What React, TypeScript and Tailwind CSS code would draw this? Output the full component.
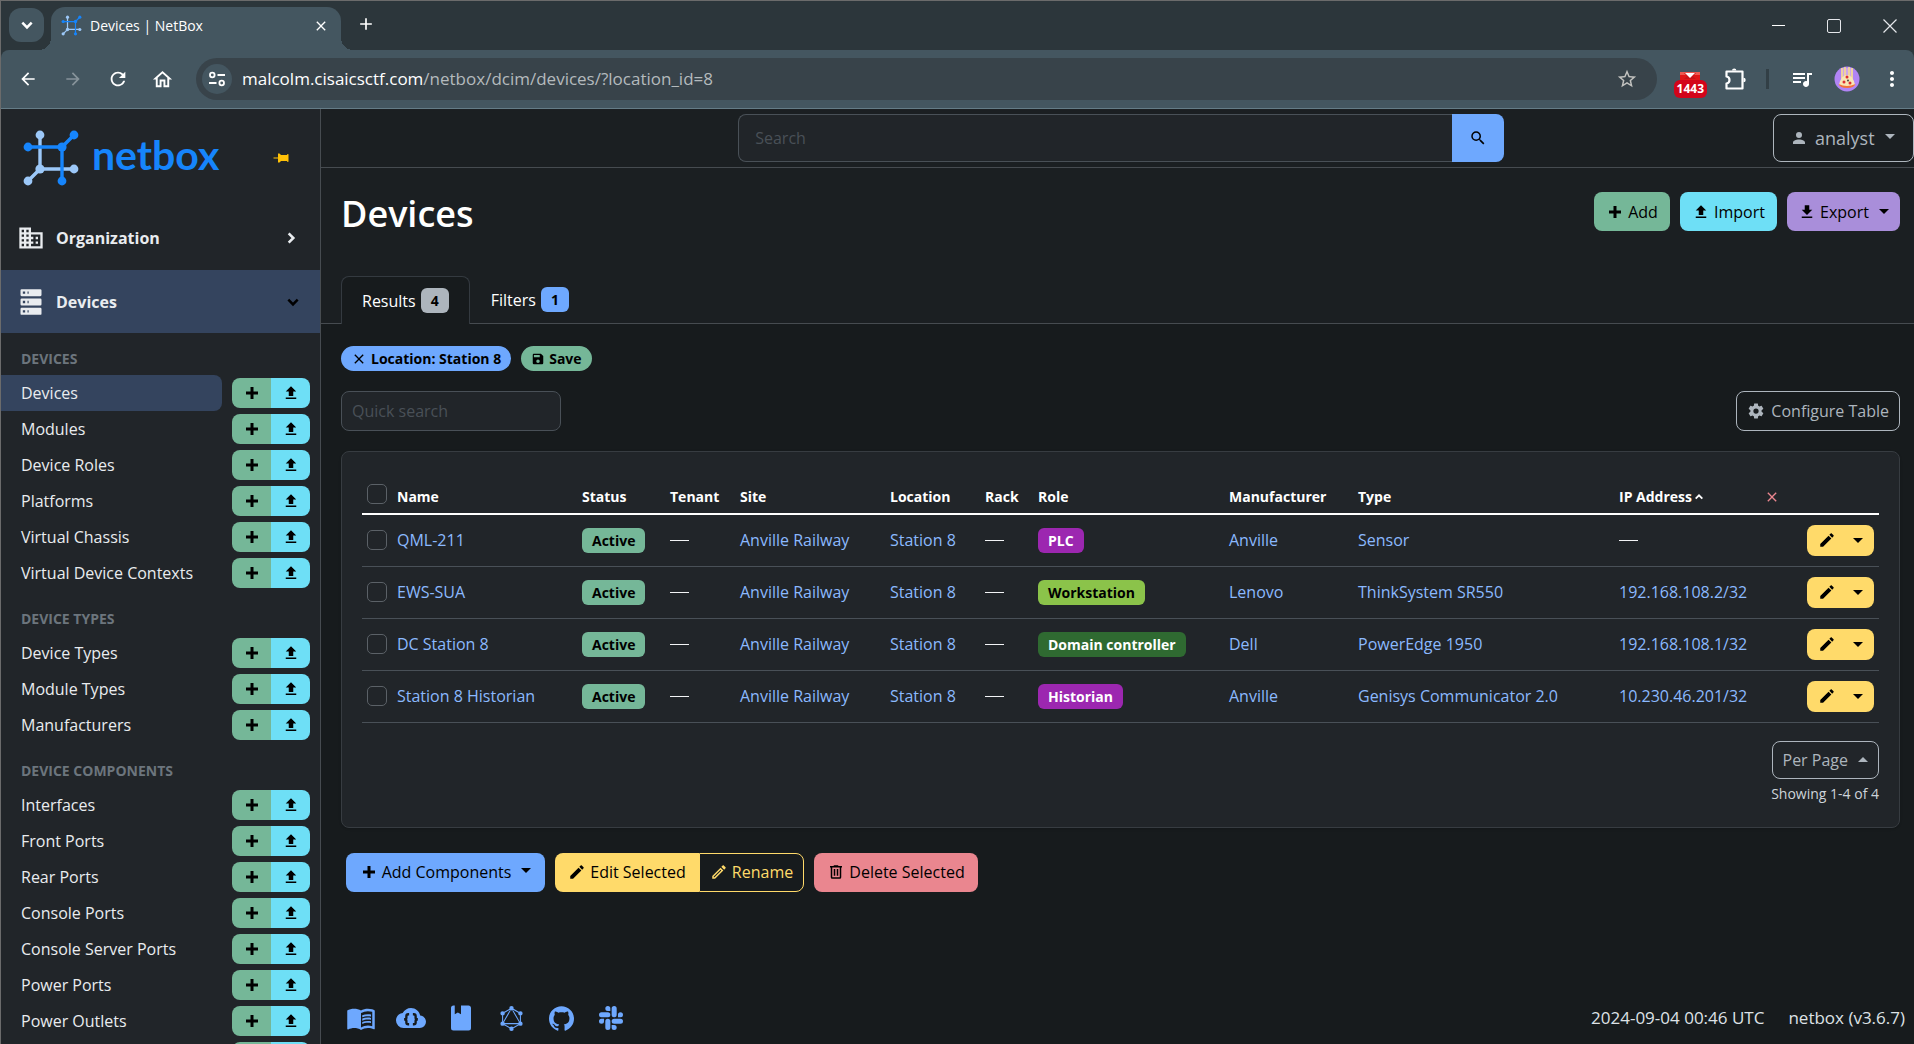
import type { ReactNode } from "react";
import {
  MdArrowBack,
  MdArrowForward,
  MdClose,
  MdAdd,
  MdRefresh,
  MdMenuBook,
  MdMoreVert,
  MdOutlineHome,
  MdQueueMusic,
  MdStarOutline,
} from "react-icons/md";
import { SiGithub, SiGraphql, SiSlack } from "react-icons/si";

const paths = {
  plus: "M20 14H14V20H10V14H4V10H10V4H14V10H20V14Z",
  upload: "M9,16V10H5L12,3L19,10H15V16H9M5,20V18H19V20H5Z",
  download: "M5,20H19V18H5M19,9H15V3H9V9H5L12,16L19,9Z",
  pencil:
    "M20.71,7.04C21.1,6.65 21.1,6 20.71,5.63L18.37,3.29C18,2.9 17.35,2.9 16.96,3.29L15.12,5.12L18.87,8.87M3,17.25V21H6.75L17.81,9.93L14.06,6.18L3,17.25Z",
  pencilOutline:
    "M14.06,9L15,9.94L5.92,19H5V18.08L14.06,9M17.66,3C17.41,3 17.15,3.1 16.96,3.29L15.13,5.12L18.88,8.87L20.71,7.04C21.1,6.65 21.1,6 20.71,5.63L18.37,3.29C18.17,3.09 17.92,3 17.66,3M14.06,6.19L3,17.25V21H6.75L17.81,9.94L14.06,6.19Z",
  trash:
    "M9,3V4H4V6H5V19A2,2 0 0,0 7,21H17A2,2 0 0,0 19,19V6H20V4H15V3H9M7,6H17V19H7V6M9,8V17H11V8H9M13,8V17H15V8H13Z",
  cog: "M12,15.5A3.5,3.5 0 0,1 8.5,12A3.5,3.5 0 0,1 12,8.5A3.5,3.5 0 0,1 15.5,12A3.5,3.5 0 0,1 12,15.5M19.43,12.97C19.47,12.65 19.5,12.33 19.5,12C19.5,11.67 19.47,11.34 19.43,11L21.54,9.37C21.73,9.22 21.78,8.95 21.66,8.73L19.66,5.27C19.54,5.05 19.27,4.96 19.05,5.05L16.56,6.05C16.04,5.66 15.5,5.32 14.87,5.07L14.5,2.42C14.46,2.18 14.25,2 14,2H10C9.75,2 9.54,2.18 9.5,2.42L9.13,5.07C8.5,5.32 7.96,5.66 7.44,6.05L4.95,5.05C4.73,4.96 4.46,5.05 4.34,5.27L2.34,8.73C2.21,8.95 2.27,9.22 2.46,9.37L4.57,11C4.53,11.34 4.5,11.67 4.5,12C4.5,12.33 4.53,12.65 4.57,12.97L2.46,14.63C2.27,14.78 2.21,15.05 2.34,15.27L4.34,18.73C4.46,18.95 4.73,19.03 4.95,18.95L7.44,17.94C7.96,18.34 8.5,18.68 9.13,18.93L9.5,21.58C9.54,21.82 9.75,22 10,22H14C14.25,22 14.46,21.82 14.5,21.58L14.87,18.93C15.5,18.67 16.04,18.34 16.56,17.94L19.05,18.95C19.27,19.03 19.54,18.95 19.66,18.73L21.66,15.27C21.78,15.05 21.73,14.78 21.54,14.63L19.43,12.97Z",
  domain:
    "M18,15H16V17H18M18,11H16V13H18M20,19H12V17H14V15H12V13H14V11H12V9H20M10,7H8V5H10M10,11H8V9H10M10,15H8V13H10M10,19H8V17H10M6,7H4V5H6M6,11H4V9H6M6,15H4V13H6M6,19H4V17H6M12,7V3H2V21H22V7H12Z",
  server:
    "M4,1H20A1,1 0 0,1 21,2V6A1,1 0 0,1 20,7H4A1,1 0 0,1 3,6V2A1,1 0 0,1 4,1M4,9H20A1,1 0 0,1 21,10V14A1,1 0 0,1 20,15H4A1,1 0 0,1 3,14V10A1,1 0 0,1 4,9M4,17H20A1,1 0 0,1 21,18V22A1,1 0 0,1 20,23H4A1,1 0 0,1 3,22V18A1,1 0 0,1 4,17M9,5H10V3H9V5M9,13H10V11H9V13M9,21H10V19H9V21M5,3V5H7V3H5M5,11V13H7V11H5M5,19V21H7V19H5Z",
  pin: "M16,12V4H17V2H7V4H8V12L6,14V16H11.2V22H12.8V16H18V14L16,12Z",
  account:
    "M12,4A4,4 0 0,1 16,8A4,4 0 0,1 12,12A4,4 0 0,1 8,8A4,4 0 0,1 12,4M12,14C16.42,14 20,15.79 20,18V20H4V18C4,15.79 7.58,14 12,14Z",
  magnify:
    "M9.5,3A6.5,6.5 0 0,1 16,9.5C16,11.11 15.41,12.59 14.44,13.73L14.71,14H15.5L20.5,19L19,20.5L14,15.5V14.71L13.73,14.44C12.59,15.41 11.11,16 9.5,16A6.5,6.5 0 0,1 3,9.5A6.5,6.5 0 0,1 9.5,3M9.5,5C7,5 5,7 5,9.5C5,12 7,14 9.5,14C12,14 14,12 14,9.5C14,7 12,5 9.5,5Z",
  save: "M15,9H5V5H15M12,19A3,3 0 0,1 9,16A3,3 0 0,1 12,13A3,3 0 0,1 15,16A3,3 0 0,1 12,19M17,3H5C3.89,3 3,3.9 3,5V19A2,2 0 0,0 5,21H19A2,2 0 0,0 21,19V7L17,3Z",
  close:
    "M19,6.41L17.59,5L12,10.59L6.41,5L5,6.41L10.59,12L5,17.59L6.41,19L12,13.41L17.59,19L19,17.59L13.41,12L19,6.41Z",
  book: "M18,22A2,2 0 0,0 20,20V4C20,2.89 19.1,2 18,2H12V9L9.5,7.5L7,9V2H6A2,2 0 0,0 4,4V20A2,2 0 0,0 6,22H18Z",
};

function Icon({ name, className = "size-[18px]" }: { name: keyof typeof paths; className?: string }) {
  return (
    <svg viewBox="0 0 24 24" fill="currentColor" aria-hidden="true" className={`shrink-0 ${className}`}>
      <path d={paths[name]} />
    </svg>
  );
}

function Chevron({ className }: { className: string }) {
  return (
    <svg viewBox="0 0 12 12" fill="none" stroke="currentColor" strokeWidth="2.2" aria-hidden="true" className={`shrink-0 ${className}`}>
      <path d="M2 4l4 4 4-4" />
    </svg>
  );
}

function Caret({ className = "" }: { className?: string }) {
  return (
    <svg viewBox="0 0 10 5" fill="currentColor" aria-hidden="true" className={`h-[5px] w-[10px] shrink-0 ${className}`}>
      <path d="M0 0H10L5 5Z" />
    </svg>
  );
}

function NetboxMark({ className }: { className: string }) {
  return (
    <svg viewBox="22 129 58 58" aria-hidden="true" className={className}>
      <g stroke="#9cc8f8" fill="#9cc8f8" strokeWidth="3.4">
        <path d="M40 135V169H74M40 169L28 181" fill="none" />
        <g stroke="none">
          <circle cx="40" cy="135" r="4.4" />
          <circle cx="40" cy="169" r="4.6" />
          <circle cx="74" cy="169" r="4.4" />
          <circle cx="28" cy="181" r="4.4" />
        </g>
      </g>
      <g stroke="#1685fc" fill="#1685fc" strokeWidth="3.4">
        <path d="M28 147H62V181M62 147L74 135" fill="none" />
        <g stroke="none">
          <circle cx="28" cy="147" r="4.4" />
          <circle cx="62" cy="147" r="4.6" />
          <circle cx="74" cy="135" r="4.4" />
          <circle cx="62" cy="181" r="4.4" />
        </g>
      </g>
    </svg>
  );
}

function TabStrip() {
  return (
    <div className="flex h-[49px] items-stretch bg-[#2c363b] pl-2 text-white">
      <button aria-label="Search tabs" className="mt-[7px] flex h-[34px] w-[35px] items-center justify-center rounded-xl bg-[#445660]">
        <Chevron className="size-3.5" />
      </button>
      <div className="relative mt-1.5 ml-[7px] flex w-[290px] items-center rounded-t-[14px] bg-[#445660] pr-3 pl-2.5">
        <span className="absolute bottom-0 -left-3 size-3 bg-[radial-gradient(circle_at_0_0,transparent_12px,#445660_12px)]" />
        <span className="absolute -right-3 bottom-0 size-3 bg-[radial-gradient(circle_at_100%_0,transparent_12px,#445660_12px)]" />
        <NetboxMark className="mb-1.5 size-[21px]" />
        <span className="mb-1.5 ml-2 flex-1 text-sm">Devices | NetBox</span>
        <button aria-label="Close tab" className="mb-1.5">
          <MdClose className="size-4" />
        </button>
      </div>
      <button aria-label="New tab" className="mb-1 ml-[15px]">
        <MdAdd className="size-5" />
      </button>
      <div className="ml-auto flex items-center text-gray-200">
        <button aria-label="Minimize" className="flex w-14 justify-center">
          <span className="h-px w-[13px] bg-white" />
        </button>
        <button aria-label="Maximize" className="flex w-14 justify-center">
          <span className="size-[14px] rounded-xs border border-gray-200" />
        </button>
        <button aria-label="Close window" className="flex w-[52px] justify-center pl-1">
          <svg viewBox="0 0 14 14" stroke="currentColor" strokeWidth="1.2" className="size-3.5">
            <path d="M.5.5l13 13M13.5.5l-13 13" />
          </svg>
        </button>
      </div>
    </div>
  );
}

function Toolbar() {
  return (
    <div className="bg-[#2c363b]">
      <div className="flex h-[59px] items-center rounded-t-lg border-b border-[#657c87] bg-[#445660] pr-2.5 pl-1.5 text-white">
        <div className="flex w-[189px] items-center">
          <button aria-label="Back" className="flex w-[45px] justify-center pr-1"><MdArrowBack className="size-5" /></button>
          <button aria-label="Forward" className="flex w-[45px] justify-center pr-1 text-[#87939a]"><MdArrowForward className="size-5" /></button>
          <button aria-label="Reload" className="flex w-[45px] justify-center pr-1"><MdRefresh className="size-[22px]" /></button>
          <button aria-label="Home" className="flex w-[45px] justify-center pr-1"><MdOutlineHome className="size-[23px]" /></button>
        </div>
        <div className="flex h-[42px] min-w-0 flex-1 items-center rounded-full bg-[#38434a] pr-[19px] pl-1.5">
          <button aria-label="Site information" className="flex size-[30px] items-center justify-center rounded-full bg-[#445660]">
            <svg viewBox="0 0 18 18" fill="none" stroke="currentColor" strokeWidth="1.8" className="size-[18px]">
              <circle cx="4.3" cy="5" r="2.3" />
              <path d="M9.5 5H17M1 13H8.5" />
              <circle cx="13.7" cy="13" r="2.3" />
            </svg>
          </button>
          <div className="ml-2.5 flex-1 text-[17px]">
            malcolm.cisaicsctf.com<span className="text-[#b4babd]">/netbox/dcim/devices/?location_id=8</span>
          </div>
          <button aria-label="Bookmark" className="text-[#c3c3c0]"><MdStarOutline className="size-[22px]" /></button>
        </div>
        <button aria-label="Mail notifications" className="ml-[17px] flex flex-col items-center pt-3">
          <svg viewBox="0 0 20 8" className="h-2 w-5">
            <path d="M0 0H20V8H0Z" fill="#e01818" />
            <path d="M0 0H20V3H0Z" fill="#ec5a50" />
            <path d="M4 1H16L13 4L16 7H4L7 4Z" fill="#c81418" />
            <path d="M5 1H15L10 6Z" fill="#fff" />
          </svg>
          <span className="rounded-md bg-[#d3041a] px-[3px] text-xs leading-[18px] font-bold">1443</span>
        </button>
        <button aria-label="Extensions" className="ml-[17px]">
          <svg viewBox="0 0 22 22" fill="none" stroke="currentColor" strokeWidth="2.2" strokeLinejoin="round" className="size-[22px]">
            <path d="M2.5 3.5H18.5V20.5H2.5V15.5Q5.5 15 5.5 12T2.5 8.500Z" />
            <path d="M8 2.600A2.200 2.200 0 0 1 12.400 2.600ZM19.500 9.800A2.200 2.200 0 0 1 19.500 14.200Z" fill="currentColor" stroke="none" />
          </svg>
        </button>
        <span className="ml-5 h-5 w-[3px] bg-[#323f46]" />
        <button aria-label="Media controls" className="ml-[21px]"><MdQueueMusic className="size-6" /></button>
        <button aria-label="Profile" className="ml-5">
          <svg viewBox="0 0 26 26" className="size-[26px]">
            <circle cx="13" cy="13" r="12.5" fill="#b184f5" />
            <path d="M7 2H19L19 13H7Z" fill="#d0a6e8" />
            <path d="M8 2V13M11 1V10M15 1V10M18 2V14" stroke="#f6dc90" strokeWidth="1.6" />
            <path d="M5 19Q7 9 13 9T21 19Q13 22 5 19Z" fill="#f8e6b4" />
            <path d="M4.5 18Q13 22 21.5 18Q20 22 13 22T4.5 18Z" fill="#f2733c" />
            <circle cx="13" cy="11" r="1.5" fill="#dd3030" />
            <circle cx="10" cy="16" r="1.5" fill="#dd3030" />
            <circle cx="16" cy="17" r="1.5" fill="#dd3030" />
            <circle cx="14" cy="14.5" r=".9" fill="#333" />
          </svg>
        </button>
        <button aria-label="Menu" className="ml-5"><MdMoreVert className="size-6" /></button>
      </div>
    </div>
  );
}

const sections = [
  { title: "DEVICES", items: ["Devices", "Modules", "Device Roles", "Platforms", "Virtual Chassis", "Virtual Device Contexts"] },
  { title: "DEVICE TYPES", items: ["Device Types", "Module Types", "Manufacturers"] },
  {
    title: "DEVICE COMPONENTS",
    items: ["Interfaces", "Front Ports", "Rear Ports", "Console Ports", "Console Server Ports", "Power Ports", "Power Outlets", ""],
  },
];

function Sidebar() {
  return (
    <nav className="w-80 shrink-0 overflow-hidden border-r border-[#464b50] bg-[#212529] text-[#e9ecef]">
      <div className="flex h-[98px] items-center pr-[30px] pl-[21px]">
        <NetboxMark className="size-[58px]" />
        <span className="mb-2 ml-3 font-[Lato,sans-serif] text-[41px] leading-none font-bold text-[#1685fc]">netbox</span>
        <button aria-label="Pin sidebar" className="ml-auto text-[#ffc107]">
          <Icon name="pin" className="size-[18px] rotate-90" />
        </button>
      </div>
      <button className="flex h-[63px] w-full items-center pr-[22px] pb-0.5 pl-4 text-base font-bold">
        <Icon name="domain" className="size-7" />
        <span className="ml-[11px]">Organization</span>
        <Chevron className="ml-auto size-3.5 -rotate-90" />
      </button>
      <button className="flex h-[63px] w-full items-center bg-[#34445e] pr-5 pl-4 text-base font-bold">
        <Icon name="server" className="size-7" />
        <span className="ml-[11px]">Devices</span>
        <Chevron className="ml-auto size-3.5 text-black" />
      </button>
      <div className="flex flex-col gap-3 pt-2.5">
        {sections.map((s) => (
          <section key={s.title}>
            <h2 className="flex h-8 items-center pl-5 text-sm font-bold text-[#6c757d]">{s.title}</h2>
            <ul>
              {s.items.map((item) => (
                <li key={item} className="flex h-9 items-center pr-2.5">
                  <a
                    href="#"
                    className={`flex h-full flex-1 items-center pl-5 text-base ${
                      s.title === "DEVICES" && item === "Devices" ? "rounded-r-lg bg-[#34445e]" : ""
                    }`}
                  >
                    {item}
                  </a>
                  <span className="ml-2.5 flex h-[30px] overflow-hidden rounded-lg text-black">
                    <button aria-label={`Add ${item}`} className="flex w-[39px] items-center justify-center bg-[#75b798]">
                      <Icon name="plus" />
                    </button>
                    <button aria-label={`Import ${item}`} className="flex w-[39px] items-center justify-center bg-[#6edff6]">
                      <Icon name="upload" />
                    </button>
                  </span>
                </li>
              ))}
            </ul>
          </section>
        ))}
      </div>
    </nav>
  );
}

function Button({ className, children }: { className: string; children: ReactNode }) {
  return (
    <button className={`flex h-[39px] items-center justify-center gap-1 text-base whitespace-nowrap ${className}`}>{children}</button>
  );
}

function Badge({ className, children }: { className: string; children: ReactNode }) {
  return <span className={`inline-block rounded-md px-2.5 text-sm leading-[25px] font-bold ${className}`}>{children}</span>;
}

const rows = [
  { name: "QML-211", role: "PLC", roleStyle: "bg-[#9c27b0] text-white", maker: "Anville", type: "Sensor", ip: "" },
  { name: "EWS-SUA", role: "Workstation", roleStyle: "bg-[#8bc34a] text-black", maker: "Lenovo", type: "ThinkSystem SR550", ip: "192.168.108.2/32" },
  { name: "DC Station 8", role: "Domain controller", roleStyle: "bg-[#2f6a31] text-white", maker: "Dell", type: "PowerEdge 1950", ip: "192.168.108.1/32" },
  { name: "Station 8 Historian", role: "Historian", roleStyle: "bg-[#9c27b0] text-white", maker: "Anville", type: "Genisys Communicator 2.0", ip: "10.230.46.201/32" },
];

const columns = [
  { label: "Name", width: "w-[185px]" },
  { label: "Status", width: "w-[88px]" },
  { label: "Tenant", width: "w-[70px]" },
  { label: "Site", width: "w-[150px]" },
  { label: "Location", width: "w-[95px]" },
  { label: "Rack", width: "w-[53px]" },
  { label: "Role", width: "w-[191px]" },
  { label: "Manufacturer", width: "w-[129px]" },
  { label: "Type", width: "w-[261px]" },
];

function Dash() {
  return <span className="block h-px w-[19px] bg-gray-100" />;
}

function Check({ label }: { label: string }) {
  return (
    <input
      type="checkbox"
      aria-label={label}
      className="block size-5 appearance-none rounded-[5px] border border-[#5b6167] bg-[#212529] checked:bg-[#6ea8fe]"
    />
  );
}

function Link({ children }: { children: ReactNode }) {
  return <a href="#" className="text-[#8bb9fe]">{children}</a>;
}

function DeviceTable() {
  return (
    <table className="w-full table-fixed text-left text-base whitespace-nowrap">
      <thead>
        <tr className="h-10 border-b-2 border-white text-sm text-white">
          <th className="w-[30px] pl-[5px]"><Check label="Select all" /></th>
          {columns.map((c) => (
            <th key={c.label} className={`pt-1.5 pl-[5px] ${c.width}`}>{c.label}</th>
          ))}
          <th className="w-[148px] pt-1.5 pl-[5px]">
            <span className="flex items-center">
              IP Address <Chevron className="ml-0.5 size-2.5 rotate-180" />
            </span>
          </th>
          <th className="w-[117px] pt-1.5 pl-0.5">
            <button aria-label="Clear ordering" className="block text-[#ea868f]"><Icon name="close" className="size-4" /></button>
          </th>
        </tr>
      </thead>
      <tbody>
        {rows.map((r) => (
          <tr key={r.name} className="h-[52px] border-b border-[#495057] *:pl-[5px]">
            <td><Check label={`Select ${r.name}`} /></td>
            <td><Link>{r.name}</Link></td>
            <td><Badge className="bg-[#75b798] text-black">Active</Badge></td>
            <td><Dash /></td>
            <td><Link>Anville Railway</Link></td>
            <td><Link>Station 8</Link></td>
            <td><Dash /></td>
            <td><Badge className={r.roleStyle}>{r.role}</Badge></td>
            <td><Link>{r.maker}</Link></td>
            <td><Link>{r.type}</Link></td>
            <td>{r.ip ? <Link>{r.ip}</Link> : <Dash />}</td>
            <td className="pr-[5px]">
              <span className="ml-auto flex h-[31px] w-[67px] overflow-hidden rounded-lg bg-[#ffda6a] text-black">
                <button aria-label={`Edit ${r.name}`} className="flex flex-1 items-center justify-center pl-1"><Icon name="pencil" /></button>
                <button aria-label={`More actions for ${r.name}`} className="flex w-8 items-center justify-center"><Caret /></button>
              </span>
            </td>
          </tr>
        ))}
      </tbody>
    </table>
  );
}

function CloudBraces() {
  return (
    <svg viewBox="0 0 24 24" className="size-[30px]" aria-hidden="true">
      <path
        fill="currentColor"
        d="M19.35,10.04C18.67,6.59 15.64,4 12,4C9.11,4 6.6,5.64 5.35,8.04C2.34,8.36 0,10.91 0,14A6,6 0 0,0 6,20H19A5,5 0 0,0 24,15C24,12.36 21.95,10.22 19.35,10.04Z"
      />
      <path
        fill="none"
        stroke="#171b1d"
        strokeWidth="1.9"
        d="M10.5 9H9.800Q8.300 9 8.300 10.500V11.700Q8.300 13 6.500 13Q8.300 13 8.300 14.300V15.500Q8.300 17 9.800 17H10.500M13.500 9H14.200Q15.700 9 15.700 10.500V11.700Q15.700 13 17.500 13Q15.700 13 15.700 14.300V15.500Q15.700 17 14.200 17H13.500"
      />
    </svg>
  );
}

function Main() {
  return (
    <main className="flex min-w-0 flex-1 flex-col overflow-hidden bg-[#171b1d] text-white">
      <div className="bg-[#1b1f22]">
        <div className="grid h-[59px] grid-cols-[1fr_48%_1fr] items-center border-b border-[#464b50]">
          <form className="col-start-2 -mr-1 ml-[3px] flex h-12">
            <input
              aria-label="Search"
              placeholder="Search"
              className="min-w-0 flex-1 rounded-l-lg border border-r-0 border-[#495057] bg-[#212529] px-4 text-base placeholder:text-[#495057]"
            />
            <button type="button" aria-label="Submit search" className="flex w-[52px] items-center justify-center rounded-r-lg bg-[#6ea8fe] text-black">
              <Icon name="magnify" />
            </button>
          </form>
          <button className="flex h-12 w-[141px] items-center justify-self-end rounded-lg border border-[#adb5bd] pl-4 text-lg text-[#adb5bd]">
            <Icon name="account" />
            <span className="ml-[7px]">analyst</span>
            <Caret className="mb-1 ml-2.5" />
          </button>
        </div>
        <div className="flex items-start justify-between pt-6 pr-3.5 pl-5">
          <h1 className="text-[36px] leading-[44px] font-semibold">Devices</h1>
          <div className="flex gap-2.5 text-black">
            <Button className="w-[76px] rounded-lg bg-[#75b798]"><Icon name="plus" />Add</Button>
            <Button className="w-[97px] rounded-lg bg-[#6edff6]"><Icon name="upload" />Import</Button>
            <Button className="w-[113px] rounded-lg bg-[#a98eda]">
              <Icon name="download" />Export<Caret className="ml-1.5" />
            </Button>
          </div>
        </div>
        <div role="tablist" className="mt-10 flex h-12 border-b border-[#464b50] pl-5 text-base">
          <button role="tab" aria-selected="true" className="-mb-px flex items-center gap-[5px] rounded-t-lg border border-b-0 border-[#343a40] bg-[#171b1d] px-5">
            Results <Badge className="bg-[#adb5bd] text-black">4</Badge>
          </button>
          <button role="tab" aria-selected="false" className="flex items-center gap-[5px] px-[21px]">
            Filters <Badge className="bg-[#6ea8fe] text-black">1</Badge>
          </button>
        </div>
      </div>

      <div className="pt-[22px] pr-3.5 pl-5">
        <div className="flex gap-2.5 text-sm font-bold text-black">
          <a href="#" className="flex h-[25px] items-center gap-1 rounded-full bg-[#6ea8fe] px-2.5">
            <Icon name="close" className="size-4" />Location: Station 8
          </a>
          <a href="#" className="flex h-[25px] items-center gap-1 rounded-full bg-[#75b798] px-2.5">
            <Icon name="save" className="size-3.5" />Save
          </a>
        </div>

        <div className="mt-5 flex items-center justify-between">
          <input
            aria-label="Quick search"
            placeholder="Quick search"
            className="h-10 w-[220px] rounded-lg border border-[#495057] bg-[#212529] px-2.5 text-base placeholder:text-[#495057]"
          />
          <button className="flex h-10 items-center gap-1.5 rounded-lg border border-[#adb5bd] px-2.5 text-base text-[#adb5bd]">
            <Icon name="cog" />Configure Table
          </button>
        </div>

        <div className="mt-5 rounded-lg border border-[#373c41] bg-[#212529] px-5 pt-[22px] pb-5 shadow-sm">
          <DeviceTable />
          <div className="mt-[18px] flex flex-col items-end text-[#ced4da]">
            <button className="flex h-[38px] items-center gap-2.5 rounded-lg border border-[#adb5bd] px-2.5 text-base text-[#adb5bd]">
              Per Page <Caret className="rotate-180" />
            </button>
            <p className="mt-1 h-6 text-sm leading-[21px]">Showing 1-4 of 4</p>
          </div>
        </div>

        <div className="mt-[25px] ml-[5px] flex gap-2.5 text-black">
          <Button className="w-[199px] rounded-lg bg-[#6ea8fe]">
            <Icon name="plus" />Add Components<Caret className="mb-1 ml-1.5" />
          </Button>
          <div className="flex">
            <Button className="w-36 rounded-l-lg bg-[#ffda6a]"><Icon name="pencil" />Edit Selected</Button>
            <Button className="w-[105px] rounded-r-lg border border-[#ffda6a] text-[#ffda6a]">
              <Icon name="pencilOutline" />Rename
            </Button>
          </div>
          <Button className="w-[164px] rounded-lg bg-[#ea868f]"><Icon name="trash" />Delete Selected</Button>
        </div>
      </div>

      <footer className="mt-auto flex h-[52px] items-center justify-between pr-[9px] pl-[25px] text-[17px] text-[#dee2e6]">
        <div className="flex gap-5 text-[#6ea8fe] *:flex *:size-[30px] *:items-center *:justify-center">
          <a href="#" aria-label="Docs"><MdMenuBook className="size-[30px]" /></a>
          <a href="#" aria-label="REST API"><CloudBraces /></a>
          <a href="#" aria-label="REST API documentation"><Icon name="book" className="size-[30px]" /></a>
          <a href="#" aria-label="GraphQL API"><SiGraphql className="size-[25px]" /></a>
          <a href="#" aria-label="Source code"><SiGithub className="size-[25px]" /></a>
          <a href="#" aria-label="Community"><SiSlack className="size-6" /></a>
        </div>
        <div className="flex gap-6">
          <span>2024-09-04 00:46 UTC</span>
          <span>netbox (v3.6.7)</span>
        </div>
      </footer>
    </main>
  );
}

export default function App() {
  return (
    <div className="flex h-screen flex-col overflow-hidden border-t border-l border-[#6b6b6b] bg-[#171b1d] font-['Open_Sans','Noto_Sans',sans-serif]">
      <TabStrip />
      <Toolbar />
      <div className="flex min-h-0 flex-1">
        <Sidebar />
        <Main />
      </div>
    </div>
  );
}
